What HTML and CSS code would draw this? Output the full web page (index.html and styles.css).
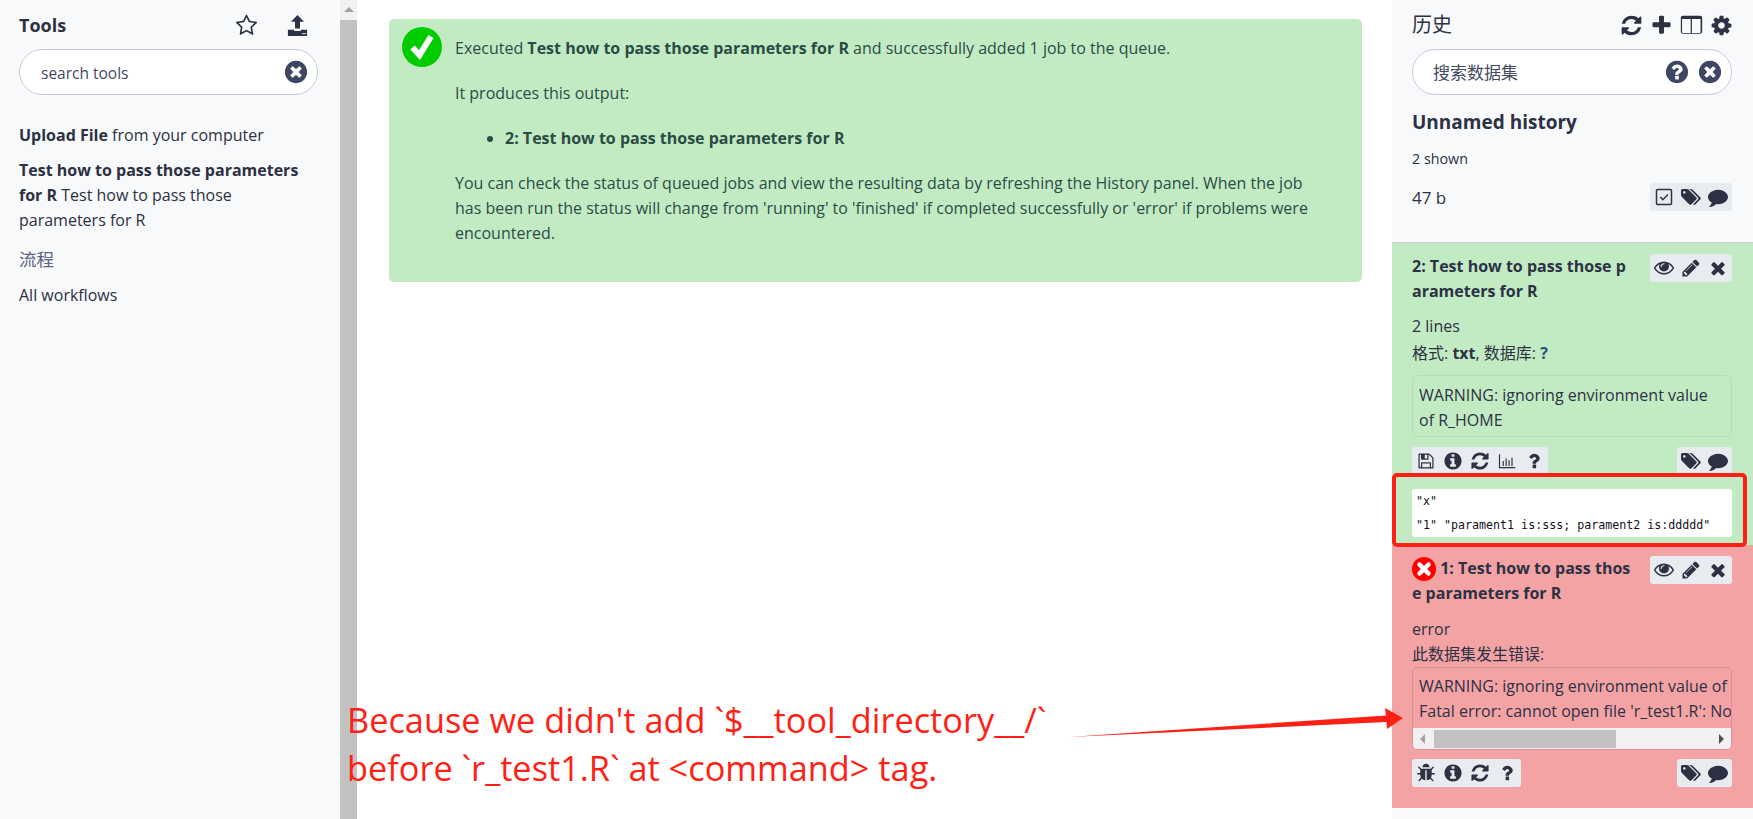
FILE: index.html
```html
<!DOCTYPE html>
<html lang="en">
<head>
<meta charset="utf-8">
<title>Galaxy</title>
<link rel="stylesheet" href="styles.css">
</head>
<body>
<svg class="defs" width="0" height="0" aria-hidden="true">
  <symbol id="i-refresh" viewBox="0 0 1792 1792"><path d="M1639 1056q0 5-1 7-64 268-268 434.500t-478 166.500q-146 0-282.500-55t-243.500-157l-129 129q-19 19-45 19t-45-19-19-45v-448q0-26 19-45t45-19h448q26 0 45 19t19 45-19 45l-137 137q71 66 161 102t187 36q134 0 250-65t186-179q11-17 53-117 8-23 30-23h192q13 0 22.500 9.500t9.500 22.500zm25-800v448q0 26-19 45t-45 19h-448q-26 0-45-19t-19-45 19-45l138-138q-148-137-349-137-134 0-250 65t-186 179q-11 17-53 117-8 23-30 23h-199q-13 0-22.500-9.500t-9.500-22.500v-7q65-268 270-434.500t480-166.500q146 0 284 55.500t245 156.500l130-129q19-19 45-19t45 19 19 45z"/></symbol>
  <symbol id="i-plus" viewBox="0 0 1792 1792"><path d="M1600 736v192q0 40-28 68t-68 28h-416v416q0 40-28 68t-68 28h-192q-40 0-68-28t-28-68v-416h-416q-40 0-68-28t-28-68v-192q0-40 28-68t68-28h416v-416q0-40 28-68t68-28h192q40 0 68 28t28 68v416h416q40 0 68 28t28 68z"/></symbol>
  <symbol id="i-times" viewBox="0 0 1792 1792"><path d="M1490 1322q0 40-28 68l-136 136q-28 28-68 28t-68-28l-294-294-294 294q-28 28-68 28t-68-28l-136-136q-28-28-28-68t28-68l294-294-294-294q-28-28-28-68t28-68l136-136q28-28 68-28t68 28l294 294 294-294q28-28 68-28t68 28l136 136q28 28 28 68t-28 68l-294 294 294 294q28 28 28 68z"/></symbol>
  <symbol id="i-qcircle" viewBox="0 0 1792 1792"><path d="M1024 1376v-192q0-14-9-23t-23-9h-192q-14 0-23 9t-9 23v192q0 14 9 23t23 9h192q14 0 23-9t9-23zm256-672q0-88-55.500-163t-138.500-116-170-41q-243 0-371 213-15 24 8 42l132 100q7 6 19 6 16 0 25-12 53-68 86-92 34-24 86-24 48 0 85.500 26t37.500 59q0 38-20 61t-68 45q-63 28-115.500 86.500t-52.500 125.500v36q0 14 9 23t23 9h192q14 0 23-9t9-23q0-19 21.500-49.500t54.500-49.500q32-18 49-28.500t46-35 44.500-48 28-60.500 12.500-81zm384 192q0 209-103 385.500t-279.500 279.500-385.500 103-385.500-103-279.500-279.500-103-385.500 103-385.500 279.500-279.500 385.500-103 385.500 103 279.500 279.500 103 385.500z"/></symbol>
  <symbol id="i-xcircle" viewBox="0 0 1792 1792"><path d="M1277 1122q0-26-19-45l-181-181 181-181q19-19 19-45 0-27-19-46l-90-90q-19-19-46-19-26 0-45 19l-181 181-181-181q-19-19-45-19-27 0-46 19l-90 90q-19 19-19 46 0 26 19 45l181 181-181 181q-19 19-19 45 0 27 19 46l90 90q19 19 46 19 26 0 45-19l181-181 181 181q19 19 45 19 27 0 46-19l90-90q19-19 19-46zm387-226q0 209-103 385.500t-279.500 279.500-385.500 103-385.500-103-279.500-279.500-103-385.500 103-385.500 279.500-279.500 385.500-103 385.500 103 279.500 279.500 103 385.500z"/></symbol>
  <symbol id="i-info" viewBox="0 0 1792 1792"><path d="M1152 1376v-160q0-14-9-23t-23-9h-96v-512q0-14-9-23t-23-9h-320q-14 0-23 9t-9 23v160q0 14 9 23t23 9h96v320h-96q-14 0-23 9t-9 23v160q0 14 9 23t23 9h448q14 0 23-9t9-23zm-128-896v-160q0-14-9-23t-23-9h-192q-14 0-23 9t-9 23v160q0 14 9 23t23 9h192q14 0 23-9t9-23zm640 416q0 209-103 385.500t-279.500 279.500-385.500 103-385.500-103-279.500-279.500-103-385.500 103-385.500 279.500-279.500 385.500-103 385.500 103 279.500 279.500 103 385.500z"/></symbol>
  <symbol id="i-question" viewBox="0 0 1792 1792"><path d="M1088 1256v240q0 16-12 28t-28 12h-240q-16 0-28-12t-12-28v-240q0-16 12-28t28-12h240q16 0 28 12t12 28zm316-600q0 54-15.500 101t-35 76.500-55 59.500-57.500 43.500-61 35.500q-41 23-68.500 65t-27.500 67q0 17-12 32.500t-28 15.500h-240q-15 0-25.500-18.500t-10.500-37.500v-45q0-83 65-156.500t143-108.500q59-27 84-56t25-76q0-42-46.500-74t-107.500-32q-65 0-108 29-35 25-107 115-13 16-31 16-12 0-25-8l-164-125q-13-10-15.500-25t5.500-28q160-266 464-266 80 0 161 31t146 83 106 127.500 41 158.500z"/></symbol>
  <symbol id="i-comment" viewBox="0 0 1792 1792"><path d="M1792 896q0 174-120 321.500t-326 233-450 85.500q-70 0-145-8-198 175-460 242-49 14-114 22-17 2-30.500-9t-17.500-29v-1q-3-4-.5-12t2-10 4.500-9.500l6-9 7-8.500 8-9q7-8 31-34.500t34.500-38 31-39.500 32.500-51 27-59 26-76q-157-89-247.500-220t-90.500-281q0-130 71-248.500t191-204.500 286-136.500 348-50.500q244 0 450 85.500t326 233 120 321.500z"/></symbol>
  <symbol id="i-tags" viewBox="0 0 1920 1792"><path d="M448 448q0-53-37.500-90.500t-90.500-37.500-90.500 37.500-37.500 90.500 37.500 90.500 90.500 37.500 90.500-37.500 37.500-90.500zm1067 576q0 53-37 90l-491 492q-39 37-91 37-53 0-90-37l-715-716q-38-37-64.500-101t-26.500-117v-416q0-52 38-90t90-38h416q53 0 117 26.500t102 64.500l715 714q37 39 37 91zm384 0q0 53-37 90l-491 492q-39 37-91 37-36 0-59-14t-53-45l470-470q37-37 37-90 0-52-37-91l-715-714q-38-38-102-64.500t-117-26.500h224q53 0 117 26.500t102 64.500l715 714q37 39 37 91z"/></symbol>
  <symbol id="i-eye" viewBox="0 0 1792 1792"><path d="M1664 960q-152-236-381-353 61 104 61 225 0 185-131.500 316.500t-316.500 131.500-316.500-131.500-131.500-316.500q0-121 61-225-229 117-381 353 133 205 333.500 326.500t434.500 121.500 434.500-121.500 333.500-326.500zm-720-384q0-20-14-34t-34-14q-125 0-214.500 89.500t-89.500 214.500q0 20 14 34t34 14 34-14 14-34q0-86 61-147t147-61q20 0 34-14t14-34zm848 384q0 34-20 69-140 230-376.500 368.500t-499.500 138.500-499.500-139-376.500-368q-20-35-20-69t20-69q140-229 376.500-368t499.500-139 499.500 139 376.500 368q20 35 20 69z" transform="translate(0 -64)"/></symbol>
  <symbol id="i-pencil" viewBox="0 0 1792 1792"><path d="M491 1536l91-91-235-235-91 91v107h128v128h107zm523-928q0-22-22-22-10 0-17 7l-542 542q-7 7-7 17 0 22 22 22 10 0 17-7l542-542q7-7 7-17zm-54-192l416 416-832 832h-416v-416zm683 96q0 53-37 90l-166 166-416-416 166-165q36-38 90-38 53 0 91 38l235 234q37 39 37 91z"/></symbol>
  <symbol id="i-columns" viewBox="0 0 1792 1792"><path d="M224 1472h608v-1088h-672v1024q0 26 19 45t45 19zm1376-64v-1024h-672v1088h608q26 0 45-19t19-45zm128-1120v1088q0 66-47 113t-113 47h-1344q-66 0-113-47t-47-113v-1088q0-66 47-113t113-47h1344q66 0 113 47t47 113z"/></symbol>
  <symbol id="i-cog" viewBox="0 0 1792 1792"><path d="M1152 896q0-106-75-181t-181-75-181 75-75 181 75 181 181 75 181-75 75-181zm512-109v222q0 12-8 23t-20 13l-185 28q-19 54-39 91 35 50 107 138 10 12 10 25t-9 23q-27 37-99 108t-94 71q-12 0-26-9l-138-108q-44 23-91 38-16 136-29 186-7 28-36 28h-222q-14 0-24.500-8.500t-11.500-21.500l-28-184q-49-16-90-37l-141 107q-10 9-25 9-14 0-25-11-126-114-165-168-7-10-7-23 0-12 8-23 15-21 51-66.500t54-70.500q-27-50-41-99l-183-27q-13-2-21-12.500t-8-23.500v-222q0-12 8-23t19-13l186-28q14-46 39-92-40-57-107-138-10-12-10-24 0-10 9-23 26-36 98.500-107.500t94.500-71.500q13 0 26 10l138 107q44-23 91-38 16-136 29-186 7-28 36-28h222q14 0 24.500 8.500t11.500 21.500l28 184q49 16 90 37l142-107q9-9 24-9 13 0 25 10 129 119 165 170 7 8 7 22 0 12-8 23-15 21-51 66.500t-54 70.500q26 50 41 98l183 28q13 2 21 12.500t8 23.500z"/></symbol>
  <symbol id="i-star" viewBox="0 0 1792 1792"><path d="M1201 1004l306-297-422-62-189-382-189 382-422 62 306 297-73 421 378-199 377 199zm527-357q0 22-26 48l-363 354 86 500q1 7 1 20 0 50-41 50-19 0-40-12l-449-236-449 236q-22 12-40 12-21 0-31.500-14.500t-10.500-35.500q0-6 2-20l86-500-364-354q-25-27-25-48 0-37 56-46l502-73 225-455q19-41 49-41t49 41l225 455 502 73q56 9 56 46z"/></symbol>
  <symbol id="i-floppy" viewBox="0 0 1792 1792"><path d="M512 1536h768v-384h-768v384zm896 0h128v-896q0-14-10-38.500t-20-34.500l-281-281q-10-10-34-20t-39-10v416q0 40-28 68t-68 28h-576q-40 0-68-28t-28-68v-416h-128v1280h128v-416q0-40 28-68t68-28h832q40 0 68 28t28 68v416zm-384-928v-320q0-13-9.500-22.500t-22.500-9.500h-192q-13 0-22.500 9.500t-9.500 22.500v320q0 13 9.500 22.500t22.500 9.500h192q13 0 22.500-9.500t9.500-22.500zm640 32v928q0 40-28 68t-68 28h-1344q-40 0-68-28t-28-68v-1344q0-40 28-68t68-28h928q40 0 88 20t76 48l280 280q28 28 48 76t20 88z"/></symbol>
  <symbol id="i-bug" viewBox="0 0 1792 1792"><path d="M1696 960q0 26-19 45t-45 19h-224q0 171-67 290l208 209q19 19 19 45t-19 45q-18 19-45 19t-45-19l-198-197q-5 5-15 13t-42 28.500-65 36.500-82 29-97 13v-896h-128v896q-51 0-101.500-13.500t-87-33-66-39-43.500-32.500l-15-14-183 207q-20 21-48 21-24 0-43-16-19-18-20.500-44.500t15.500-46.500l202-227q-58-114-58-274h-224q-26 0-45-19t-19-45 19-45 45-19h224v-294l-173-173q-19-19-19-45t19-45 45-19 45 19l173 173h844l173-173q19-19 45-19t45 19 19 45-19 45l-173 173v294h224q26 0 45 19t19 45zm-480-576h-640q0-133 93.500-226.500t226.500-93.500 226.500 93.500 93.500 226.500z"/></symbol>
  <symbol id="i-chart" viewBox="0 0 24 24"><path d="M3 4v16h19M7.500 12v6M11 9v9M14.500 11v7M18 8v10" fill="none" stroke="currentColor" stroke-width="1.400"/></symbol>
  <symbol id="i-check" viewBox="0 0 24 24"><rect x="3" y="3" width="18" height="18" rx="1.500" fill="none" stroke="currentColor" stroke-width="1.800"/><path d="M7.500 12l3.200 3.200 6-6.200" fill="none" stroke="currentColor" stroke-width="1.800"/></symbol>
  <symbol id="i-upload" viewBox="0 0 24 24"><path d="M12 1l6.800 7.200h-4.200v6.800H9.400V8.200H5.200zM2 16.500h6.500v1.200h7v-1.200H22V23H2z"/><rect x="17" y="19.800" width="1.400" height="1.400" fill="#f8f9fa"/><rect x="19.200" y="19.800" width="1.400" height="1.400" fill="#f8f9fa"/></symbol>
</svg>

<div class="app">
  <aside class="tools">
    <header class="tools-head">
      <h2 class="panel-title">Tools</h2>
      <div class="tools-actions">
        <svg class="ico ico-star"><use href="#i-star"/></svg>
        <svg class="ico ico-upload"><use href="#i-upload"/></svg>
      </div>
    </header>
    <div class="search">
      <span class="search-text search-latin">search tools</span>
      <svg class="ico ico-search"><use href="#i-xcircle"/></svg>
    </div>
    <p class="tool tool-first"><b>Upload File</b> from your computer</p>
    <p class="tool"><b>Test how to pass those parameters for R</b> Test how to pass those parameters for R</p>
    <p class="section">流程</p>
    <p class="tool tool-link">All workflows</p>
  </aside>

  <div class="scrollbar">
    <span class="scroll-up"></span>
    <span class="scroll-thumb"></span>
  </div>

  <main class="center">
    <section class="alert">
      <svg class="alert-icon" viewBox="0 0 40 40">
        <circle cx="20" cy="20" r="20" fill="#00cc00"/>
        <path d="M10.500 20.500l7 7.500L29 9.500" fill="none" stroke="#fff" stroke-width="6"/>
      </svg>
      <div class="alert-body">
        <p>Executed <b>Test how to pass those parameters for R</b> and successfully added 1 job to the queue.</p>
        <p>It produces this output:</p>
        <ul><li><b>2: Test how to pass those parameters for R</b></li></ul>
        <p>You can check the status of queued jobs and view the resulting data by refreshing the History panel. When the job has been run the status will change from 'running' to 'finished' if completed successfully or 'error' if problems were encountered.</p>
      </div>
    </section>
  </main>

  <aside class="history">
    <div class="hist-head">
      <div class="hist-top">
        <h2 class="panel-title panel-title-cjk">历史</h2>
        <div class="hist-actions">
          <svg class="ico ico-h"><use href="#i-refresh"/></svg>
          <svg class="ico ico-h"><use href="#i-plus"/></svg>
          <svg class="ico ico-h"><use href="#i-columns"/></svg>
          <svg class="ico ico-h"><use href="#i-cog"/></svg>
        </div>
      </div>
      <div class="search">
        <span class="search-text search-cjk">搜索数据集</span>
        <svg class="ico ico-search ico-search-q"><use href="#i-qcircle"/></svg>
        <svg class="ico ico-search"><use href="#i-xcircle"/></svg>
      </div>
      <h3 class="hist-name">Unnamed history</h3>
      <p class="hist-shown">2 shown</p>
      <div class="hist-size">
        <span>47 b</span>
        <div class="btns">
          <svg class="ico ico-b"><use href="#i-check"/></svg>
          <svg class="ico ico-b"><use href="#i-tags"/></svg>
          <svg class="ico ico-b"><use href="#i-comment"/></svg>
        </div>
      </div>
    </div>

    <article class="item item-ok">
      <div class="item-head">
        <h4 class="item-title">2: Test how to pass those parameters for R</h4>
        <div class="btns">
          <svg class="ico ico-b"><use href="#i-eye"/></svg>
          <svg class="ico ico-b"><use href="#i-pencil"/></svg>
          <svg class="ico ico-b"><use href="#i-times"/></svg>
        </div>
      </div>
      <p class="item-meta">2 lines<br>格式: <b>txt</b>, 数据库: <b class="q">?</b></p>
      <div class="info">WARNING: ignoring environment value of R_HOME</div>
      <div class="item-actions">
        <div class="btns">
          <svg class="ico ico-b ico-floppy"><use href="#i-floppy"/></svg>
          <svg class="ico ico-b"><use href="#i-info"/></svg>
          <svg class="ico ico-b"><use href="#i-refresh"/></svg>
          <svg class="ico ico-b"><use href="#i-chart"/></svg>
          <svg class="ico ico-b"><use href="#i-question"/></svg>
        </div>
        <div class="btns">
          <svg class="ico ico-b"><use href="#i-tags"/></svg>
          <svg class="ico ico-b"><use href="#i-comment"/></svg>
        </div>
      </div>
      <pre class="peek">"x"
"1" "parament1 is:sss; parament2 is:ddddd"</pre>
    </article>

    <article class="item item-err">
      <div class="item-head">
        <h4 class="item-title"><svg class="err-icon" viewBox="0 0 24 24"><circle cx="12" cy="12" r="12" fill="#f00"/><path d="M7.500 7.500l9 9M16.500 7.500l-9 9" stroke="#fff" stroke-width="4.500" stroke-linecap="round"/></svg> 1: Test how to pass those parameters for R</h4>
        <div class="btns">
          <svg class="ico ico-b"><use href="#i-eye"/></svg>
          <svg class="ico ico-b"><use href="#i-pencil"/></svg>
          <svg class="ico ico-b"><use href="#i-times"/></svg>
        </div>
      </div>
      <p class="item-meta item-meta-err">error<br>此数据集发生错误:</p>
      <div class="info info-err">
        <div class="info-lines">WARNING: ignoring environment value of R_HOME<br>Fatal error: cannot open file 'r_test1.R': No such file or directory</div>
        <div class="hscroll">
          <span class="arrow-l"></span>
          <span class="hthumb"></span>
          <span class="arrow-r"></span>
        </div>
      </div>
      <div class="item-actions item-actions-err">
        <div class="btns">
          <svg class="ico ico-b"><use href="#i-bug"/></svg>
          <svg class="ico ico-b"><use href="#i-info"/></svg>
          <svg class="ico ico-b"><use href="#i-refresh"/></svg>
          <svg class="ico ico-b"><use href="#i-question"/></svg>
        </div>
        <div class="btns">
          <svg class="ico ico-b"><use href="#i-tags"/></svg>
          <svg class="ico ico-b"><use href="#i-comment"/></svg>
        </div>
      </div>
    </article>
  </aside>
</div>

<div class="note">Because we didn't add `$__tool_directory__/`<br>before `r_test1.R` at &lt;command&gt; tag.</div>
<svg class="note-arrow" viewBox="0 0 340 30"><path d="M0 29L317 7.500 316 0 334 10 318 21 317.500 14z" fill="#ff2015"/></svg>
<div class="highlight"></div>
</body>
</html>
```

FILE: styles.css
```css
* { box-sizing: border-box; }
html, body { margin: 0; height: 100%; overflow: hidden; }
body {
  font-family: "Open Sans", "Noto Sans CJK SC", sans-serif;
  font-size: 16px;
  line-height: 25px;
  color: #2c3143;
  background: #fff;
  position: relative;
}
p, h2, h3, h4, ul, pre { margin: 0; }
.defs { position: absolute; }
.app { display: grid; grid-template-columns: 340px 17px 1035px 361px; height: 819px; }
.ico { display: block; fill: currentColor; flex: none; }

.tools { background: #f8f9fa; padding: 12px 22px 0 19px; }
.tools-head { display: flex; justify-content: space-between; align-items: center; height: 26px; margin-bottom: 11px; }
.panel-title { font-size: 18px; font-weight: 700; line-height: 26px; }
.panel-title-cjk { font-weight: 400; font-size: 20px; }
.tools-actions { display: flex; align-items: center; gap: 28px; margin-right: 9px; }
.ico-star { width: 23px; height: 23px; }
.ico-upload { width: 23px; height: 23px; }

.search {
  display: flex; align-items: center; height: 46px; padding: 0 8px 0 20px;
  background: #fff; border: 1px solid #c6cbdd; border-radius: 23px; gap: 7px;
}
.search-text { flex: 1; font-size: 15.500px; color: #444a60; position: relative; top: 1px; }
.search-latin { margin-left: 1px; }
.search-cjk { font-size: 17px; top: 0; }
.ico-search { width: 26px; height: 26px; color: #3f4663; }

.tool { margin-top: 10px; color: #2c3143; }
.tool-first { margin-top: 28px; }
.section { margin-top: 13px; font-size: 17.500px; color: #5e6380; line-height: 26px; }
.tool-link { margin-top: 11px; }

.scrollbar { background: #f1f1f1; display: flex; flex-direction: column; align-items: stretch; }
.scroll-up { height: 20px; position: relative; }
.scroll-up::before {
  content: ""; position: absolute; left: 4px; top: 7px;
  border: 5px solid transparent; border-top: 0; border-bottom: 5px solid #a3a3a3;
}
.scroll-thumb { flex: 1; background: #c1c1c1; }

.center { padding: 19px 30px 0 32px; }
.alert {
  display: flex; height: 263px; padding: 8px 43px 0 13px; gap: 13px;
  background: #c3ebc3; border-radius: 5px; color: #2a4c45;
}
.alert-icon { width: 40px; height: 40px; flex: none; }
.alert-body { padding-top: 9px; flex: 1; }
.alert-body p { margin-bottom: 20px; }
.alert-body ul { margin-bottom: 20px; padding-left: 50px; }

.history { background: #f8f9fa; display: flex; flex-direction: column; }
.hist-head { height: 243px; padding: 12px 20px 0 20px; border-bottom: 1px solid #c6cbdd; }
.hist-top { display: flex; justify-content: space-between; align-items: center; height: 26px; margin-bottom: 11px; }
.hist-actions { display: flex; gap: 7px; align-items: center; }
.ico-h { width: 23px; height: 23px; }
.hist-name { font-size: 19px; font-weight: 700; line-height: 26px; margin-top: 14px; }
.hist-shown { font-size: 14.300px; line-height: 20px; margin-top: 14px; }
.hist-size { display: flex; justify-content: space-between; align-items: center; margin-top: 14px; font-size: 17px; }
.hist-head .search { margin-right: 1px; }
.hist-size { margin-right: 1px; }

.btns {
  display: flex; align-items: center; gap: 7px; height: 28px; padding: 0 4px;
  background: #e8ebef; border-radius: 3px; flex: none;
}
.ico-b { width: 20px; height: 20px; }
.ico-floppy { transform: scale(.88); }

.item { padding: 11px 21px 0 20px; }
.item-ok { background: #c3ebc3; height: 302px; }
.item-err { background: #f4a3a5; height: 263px; }
.item-head { display: flex; justify-content: space-between; align-items: flex-start; }
.item-title { flex: 0 0 222px; font-size: 16px; font-weight: 700; line-height: 25px; word-break: break-all; }
.err-icon { display: inline-block; width: 24px; height: 24px; vertical-align: -7px; }
.item-meta { margin-top: 9px; line-height: 27px; }
.item-meta-err { margin-top: 11px; line-height: 25px; }
.q { color: #25537b; }
.info {
  margin-top: 8px; padding: 7px 6px 5px; height: 62px;
  border: 1px solid rgba(44, 49, 67, .08); border-radius: 5px;
}
.info-err { margin-top: 0; height: 83px; padding: 6px 0 0; overflow: hidden; border-color: rgba(44, 49, 67, .15); }
.info-lines { white-space: nowrap; overflow: hidden; padding-left: 6px; height: 54px; }
.hscroll { display: flex; align-items: center; height: 21px; background: #f1f1f1; padding: 0 0 0 21px; position: relative; }
.hthumb { width: 182px; height: 18px; background: #c1c1c1; }
.arrow-l, .arrow-r { position: absolute; top: 6px; width: 0; height: 0; border: 5px solid transparent; }
.arrow-l { left: 7px; border-left: 0; border-right: 5px solid #a3a3a3; }
.arrow-r { right: 7px; border-right: 0; border-left: 5px solid #505050; }
.item-actions { display: flex; justify-content: space-between; margin-top: 10px; }
.item-actions-err { margin-top: 9px; }
.peek {
  margin-top: 14px; height: 48px; padding: 0 4px; background: #fff; border-radius: 3px;
  font-family: "DejaVu Sans Mono", monospace; font-size: 11.650px; line-height: 24px; color: #111118;
}

.note {
  position: absolute; left: 347px; top: 696px;
  font-family: "Open Sans", sans-serif; font-size: 34.300px; line-height: 48px; color: #ff1f16;
  white-space: nowrap;
}
.note-arrow { position: absolute; left: 1069px; top: 708px; width: 340px; height: 30px; }
.highlight {
  position: absolute; left: 1392px; top: 473px; width: 355px; height: 74px;
  border: 4px solid #ff2015; border-radius: 5px;
}
```
